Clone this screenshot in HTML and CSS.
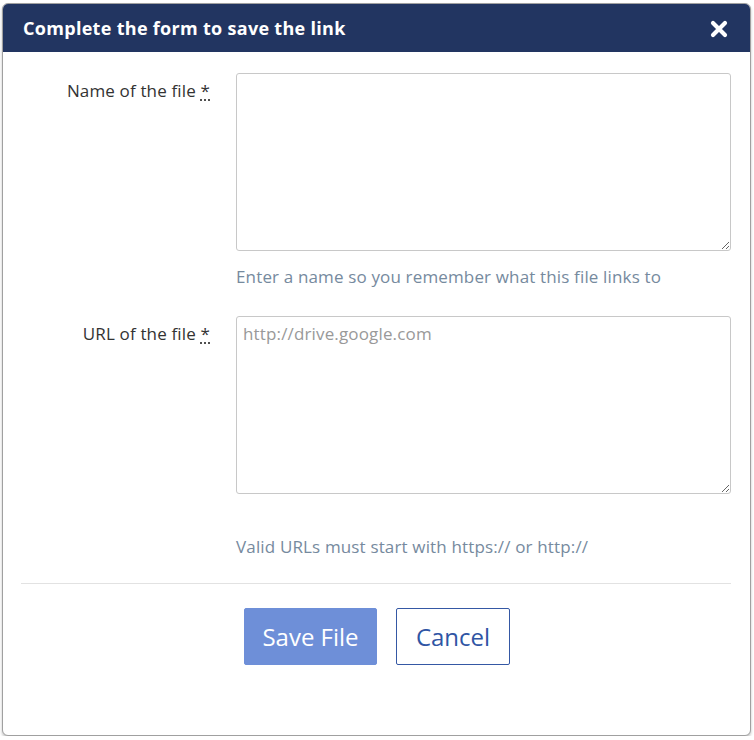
FILE: index.html
```html
<!DOCTYPE html>
<html>
<head>
<meta charset="utf-8">
<link rel="stylesheet" href="styles.css">
</head>
<body>
<div class="dialog">
  <div class="header">
    <span class="title">Complete the form to save the link</span>
    <svg class="close" width="18" height="18" viewBox="0 0 18 18"><path d="M3 3 L15 15 M15 3 L3 15" stroke="#fff" stroke-width="4.2" stroke-linecap="round"/></svg>
  </div>
  <div class="body">
    <div class="row">
      <label class="label">Name of the file <abbr>*</abbr></label>
      <div class="field">
        <textarea class="input"></textarea>
        <p class="help">Enter a name so you remember what this file links to</p>
      </div>
    </div>
    <div class="row">
      <label class="label">URL of the file <abbr>*</abbr></label>
      <div class="field">
        <textarea class="input" placeholder="http://drive.google.com"></textarea>
        <p class="help help-url">Valid URLs must start with https:// or http://</p>
      </div>
    </div>
    <div class="divider"></div>
    <div class="actions">
      <button class="btn btn-primary">Save File</button>
      <button class="btn btn-secondary">Cancel</button>
    </div>
  </div>
</div>
</body>
</html>
```
FILE: styles.css
```css
* { box-sizing: border-box; }
html, body { margin: 0; padding: 0; background: #fff; }
body { padding: 3px 3px 0 2px; font-family: "Open Sans", sans-serif; }
.dialog {
  width: 749px;
  height: 733px;
  border: 1px solid #a0a0a0;
  border-radius: 6px;
  overflow: hidden;
  background: #fff;
  box-shadow: 0 2px 3px rgba(0,0,0,0.25);
}
.header {
  height: 48px;
  background: #223561;
  display: flex;
  align-items: center;
  justify-content: space-between;
  padding: 0 22px 0 20px;
}
.title {
  color: #fff;
  font-weight: 700;
  font-size: 18px;
  letter-spacing: 0.3px;
}
.close { display: block; margin-top: 2px; }
.body { padding: 21px 19px 0 18px; }
.row {
  display: grid;
  grid-template-columns: 189px 495px;
  column-gap: 26px;
}
.label {
  text-align: right;
  font-size: 17px;
  letter-spacing: 0.15px;
  color: #333;
  padding-top: 7px;
  line-height: 22px;
}
.label abbr {
  text-decoration: underline dotted;
  text-underline-offset: 3px;
  cursor: help;
}
.input {
  display: block;
  width: 495px;
  height: 178px;
  border: 1px solid #c8c8c8;
  border-radius: 3px;
  padding: 6px 6px;
  font-family: "Open Sans", sans-serif;
  font-size: 17px;
  letter-spacing: 0.15px;
  line-height: 22px;
  color: #333;
  resize: vertical;
}
.input::placeholder { color: #999; }
.help {
  margin: 15px 0 0 0;
  font-size: 17px;
  letter-spacing: 0.15px;
  line-height: 22px;
  color: #768a9e;
  height: 50px;
}
.help-url { margin-top: 42px; height: 24px; }
.divider {
  border-top: 1px solid #e2e2e2;
  margin-top: 23px;
}
.actions {
  display: flex;
  justify-content: center;
  gap: 19px;
  padding-top: 24px;
  padding-left: 2px;
}
.btn {
  height: 57px;
  font-family: "Open Sans", sans-serif;
  font-size: 24px;
  border-radius: 2px;
  padding: 0;
}
.btn-primary {
  background: #6e8fd8;
  color: #fff;
  border: 1px solid #6e8fd8;
  width: 133px;
}
.btn-secondary {
  background: #fff;
  color: #2f55a4;
  border: 1px solid #3558a4;
  width: 114px;
}
```
